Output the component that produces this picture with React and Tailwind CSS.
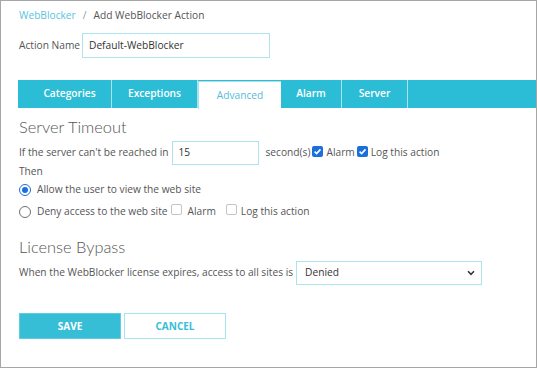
import React from "react";

function Check({ on }) {
  if (on) {
    return (
      <span className="inline-flex w-[11px] h-[11px] rounded-[2px] bg-[#1a6fdc] items-center justify-center shrink-0">
        <svg width="9" height="9" viewBox="0 0 10 10">
          <path d="M1.8 5.2 L4 7.3 L8.3 2.6" fill="none" stroke="white" strokeWidth="1.8" />
        </svg>
      </span>
    );
  }
  return <span className="inline-block w-[11px] h-[11px] rounded-[2px] border border-[#c4c4c4] bg-white shrink-0" />;
}

function Radio({ on }) {
  if (on) {
    return (
      <span className="inline-flex w-[12px] h-[12px] rounded-full border border-[#1a6fdc] items-center justify-center shrink-0">
        <span className="w-[6px] h-[6px] rounded-full bg-[#1a6fdc]" />
      </span>
    );
  }
  return <span className="inline-block w-[12px] h-[12px] rounded-full border border-[#6f6f6f] shrink-0" />;
}

export default function App() {
  const tabs = [
    { label: "Categories", w: "w-[94px] pl-[10px]" },
    { label: "Exceptions", w: "w-[86px]" },
    { label: "Advanced", w: "w-[83px]", active: true },
    { label: "Alarm", w: "w-[61px]" },
    { label: "Server", w: "w-[66px]" },
  ];
  return (
    <div className="w-[537px] h-[368px] border border-[#a6a6a6] bg-white overflow-hidden font-['Open_Sans',sans-serif] text-[10.2px] text-[#555]">
      <div className="pl-[18px] pt-[7px] h-[14px] box-content flex items-center gap-[7px] leading-[14px]">
        <span className="text-[#5cc3df]">WebBlocker</span>
        <span className="text-[#999]">/</span>
        <span className="text-[#555]">Add WebBlocker Action</span>
      </div>
      <div className="pl-[18px] mt-[11px] flex items-center h-[25px]">
        <span className="w-[63px]">Action Name</span>
        <div className="w-[188px] h-[25px] border border-[#ade3ee] pl-[6px] flex items-center text-[#333]">
          Default-WebBlocker
        </div>
      </div>
      <div className="ml-[17px] mt-[22px] h-[28px] bg-[#2bbcd6] flex">
        {tabs.map((t) =>
          t.active ? (
            <div
              key={t.label}
              className={`${t.w} h-[28px] mt-[1px] bg-white border-t border-l border-[#a9e2ec] flex items-center justify-center text-[#56bcdb]`}
            >
              {t.label}
            </div>
          ) : (
            <div
              key={t.label}
              className={`${t.w} h-[28px] border-r border-[#a8e3ee] flex items-center justify-center text-white font-semibold`}
            >
              {t.label}
            </div>
          )
        )}
      </div>
      <div className="pl-[18px]">
        <div className="mt-[9px] h-[20px] flex items-center font-['Lato',sans-serif] text-[16.4px] font-light text-[#555]">
          Server Timeout
        </div>
        <div className="mt-[4px] h-[24px] flex items-center">
          <span>If the server can't be reached in</span>
          <div className="ml-[3px] w-[87px] h-[24px] border border-[#ade3ee] pl-[6px] flex items-center text-[#333]">15</div>
          <span className="ml-[7px]">second(s)</span>
          <span className="ml-[2px]"><Check on /></span>
          <span className="ml-[3px]">Alarm</span>
          <span className="ml-[2px]"><Check on /></span>
          <span className="ml-[3px]">Log this action</span>
        </div>
        <div className="h-[14px] flex items-center">Then</div>
        <div className="mt-[3px] h-[16px] flex items-center">
          <Radio on />
          <span className="ml-[6px]">Allow the user to view the web site</span>
        </div>
        <div className="mt-[6px] h-[16px] flex items-center">
          <Radio />
          <span className="ml-[6px]">Deny access to the web site</span>
          <span className="ml-[3px]"><Check /></span>
          <span className="ml-[6px]">Alarm</span>
          <span className="ml-[10px]"><Check /></span>
          <span className="ml-[4px]">Log this action</span>
        </div>
        <div className="mt-[17px] h-[20px] flex items-center font-['Lato',sans-serif] text-[16.4px] font-light text-[#555]">
          License Bypass
        </div>
        <div className="mt-[4px] h-[24px] flex items-center">
          <span>When the WebBlocker license expires, access to all sites is</span>
          <div className="ml-[3px] w-[186px] h-[24px] border border-[#ade3ee] pl-[8px] pr-[6px] flex items-center justify-between text-[#333]">
            <span>Denied</span>
            <svg width="8" height="6" viewBox="0 0 8 6">
              <path d="M1 1.2 L4 4.3 L7 1.2" fill="none" stroke="#333" strokeWidth="1.5" />
            </svg>
          </div>
        </div>
        <div className="mt-[28px] flex gap-[3px]">
          <button className="w-[102px] h-[26px] bg-[#36bed7] border border-[#5fcde0] text-white font-bold text-[10px] flex items-center justify-center">
            SAVE
          </button>
          <button className="w-[102px] h-[26px] bg-white border border-[#a6e4ef] text-[#36bed7] font-bold text-[10px] flex items-center justify-center">
            CANCEL
          </button>
        </div>
      </div>
    </div>
  );
}
